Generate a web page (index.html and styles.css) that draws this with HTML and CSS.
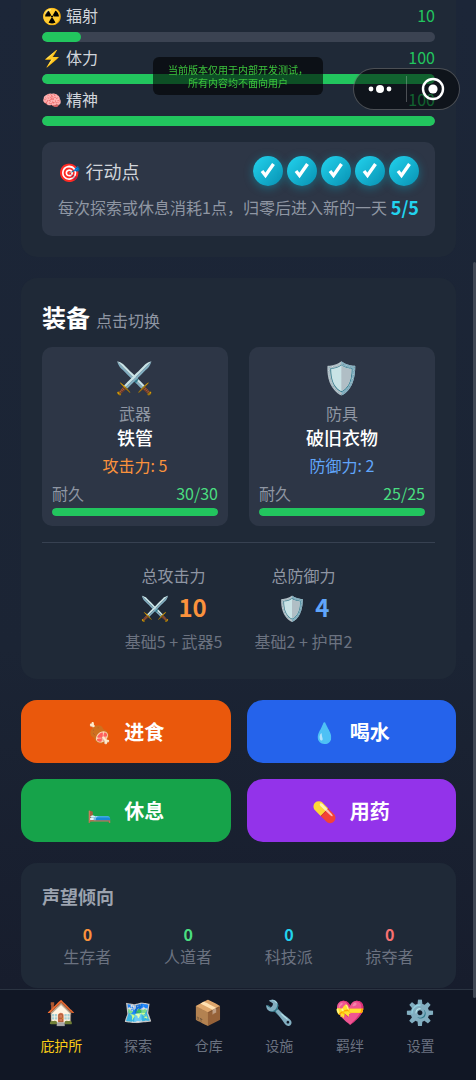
FILE: index.html
```
<!DOCTYPE html>
<html lang="zh-CN">
<head>
    <meta charset="UTF-8">
    <meta name="viewport" content="width=device-width, initial-scale=1.0">
    <title>庇护所</title>
    <link rel="stylesheet" href="styles.css">
</head>
<body>
    <div class="notice">当前版本仅用于内部开发测试，<br>所有内容均不面向用户</div>
    <div class="capsule">
        <button type="button" aria-label="更多">
            <svg width="24" height="24" viewBox="0 0 24 24" fill="#fff"><circle cx="3" cy="12" r="2.4"/><circle cx="12" cy="12" r="4"/><circle cx="21" cy="12" r="2.4"/></svg>
        </button>
        <span class="capsule-line"></span>
        <button type="button" aria-label="关闭">
            <svg width="24" height="24" viewBox="0 0 24 24"><circle cx="12" cy="12" r="10" fill="none" stroke="#fff" stroke-width="2.4"/><circle cx="12" cy="12" r="4.6" fill="#fff"/></svg>
        </button>
    </div>
    <div class="scrollbar"></div>

    <main class="page">
        <section class="card status">
            <div class="stat">
                <div class="stat-head"><span><i class="emoji">☢️</i>辐射</span><span class="stat-value">10</span></div>
                <div class="bar"><div class="bar-fill" style="width: 10%"></div></div>
            </div>
            <div class="stat">
                <div class="stat-head"><span><i class="emoji">⚡</i>体力</span><span class="stat-value">100</span></div>
                <div class="bar"><div class="bar-fill" style="width: 100%"></div></div>
            </div>
            <div class="stat">
                <div class="stat-head"><span><i class="emoji">🧠</i>精神</span><span class="stat-value">100</span></div>
                <div class="bar"><div class="bar-fill" style="width: 100%"></div></div>
            </div>
            <div class="action">
                <div class="action-row">
                    <span class="action-title"><i class="emoji">🎯</i>行动点</span>
                    <div class="points">
                        <span class="point"><svg viewBox="0 0 30 30"><path d="M9 15l3.500 4.500L20.500 8"/></svg></span>
                        <span class="point"><svg viewBox="0 0 30 30"><path d="M9 15l3.500 4.500L20.500 8"/></svg></span>
                        <span class="point"><svg viewBox="0 0 30 30"><path d="M9 15l3.500 4.500L20.500 8"/></svg></span>
                        <span class="point"><svg viewBox="0 0 30 30"><path d="M9 15l3.500 4.500L20.500 8"/></svg></span>
                        <span class="point"><svg viewBox="0 0 30 30"><path d="M9 15l3.500 4.500L20.500 8"/></svg></span>
                    </div>
                </div>
                <div class="action-row">
                    <span class="action-hint">每次探索或休息消耗1点，归零后进入新的一天</span>
                    <span class="action-count">5/5</span>
                </div>
            </div>
        </section>

        <section class="card">
            <h2>装备<small>点击切换</small></h2>
            <div class="equips">
                <button type="button" class="equip">
                    <i class="emoji">⚔️</i>
                    <span class="equip-slot">武器</span>
                    <span class="equip-name">铁管</span>
                    <span class="equip-stat orange">攻击力: 5</span>
                    <span class="equip-dur"><span>耐久</span><span class="green">30/30</span></span>
                    <span class="bar small"><span class="bar-fill" style="width: 100%"></span></span>
                </button>
                <button type="button" class="equip">
                    <i class="emoji">🛡️</i>
                    <span class="equip-slot">防具</span>
                    <span class="equip-name">破旧衣物</span>
                    <span class="equip-stat blue">防御力: 2</span>
                    <span class="equip-dur"><span>耐久</span><span class="green">25/25</span></span>
                    <span class="bar small"><span class="bar-fill" style="width: 100%"></span></span>
                </button>
            </div>
            <div class="totals">
                <div class="total">
                    <span class="total-label">总攻击力</span>
                    <span class="total-value orange"><i class="emoji">⚔️</i>10</span>
                    <span class="total-note">基础5 + 武器5</span>
                </div>
                <div class="total">
                    <span class="total-label">总防御力</span>
                    <span class="total-value blue"><i class="emoji">🛡️</i>4</span>
                    <span class="total-note">基础2 + 护甲2</span>
                </div>
            </div>
        </section>

        <div class="actions">
            <button type="button" class="eat"><i class="emoji">🍖</i>进食</button>
            <button type="button" class="drink"><i class="emoji">💧</i>喝水</button>
            <button type="button" class="rest"><i class="emoji">🛏️</i>休息</button>
            <button type="button" class="heal"><i class="emoji">💊</i>用药</button>
        </div>

        <section class="card">
            <h3>声望倾向</h3>
            <div class="factions">
                <div><b class="orange">0</b><span>生存者</span></div>
                <div><b class="green">0</b><span>人道者</span></div>
                <div><b class="cyan">0</b><span>科技派</span></div>
                <div><b class="red">0</b><span>掠夺者</span></div>
            </div>
        </section>
    </main>

    <nav class="tabs">
        <a href="#home" class="active"><i class="emoji">🏠</i>庇护所</a>
        <a href="#explore"><i class="emoji">🗺️</i>探索</a>
        <a href="#storage"><i class="emoji">📦</i>仓库</a>
        <a href="#facility"><i class="emoji">🔧</i>设施</a>
        <a href="#bond"><i class="emoji">💝</i>羁绊</a>
        <a href="#settings"><i class="emoji">⚙️</i>设置</a>
    </nav>
</body>
</html>
```

FILE: styles.css
```
* {
    box-sizing: border-box;
}
body {
    margin: 0;
    min-height: 100vh;
    display: flex;
    flex-direction: column;
    font-family: "Noto Sans CJK SC", sans-serif;
    font-size: 16px;
    line-height: 24px;
    color: #d1d5db;
    background: linear-gradient(180deg, #1c2638, #1b2434 60%, #161b2b);
}
button {
    font: inherit;
    color: inherit;
    border: none;
    padding: 0;
    cursor: pointer;
}
.emoji {
    font-family: "Noto Color Emoji", sans-serif;
    font-style: normal;
    font-weight: 400;
    line-height: 1;
}
.orange { color: #fb923c; }
.blue { color: #60a5fa; }
.green { color: #4ade80; }
.cyan { color: #22d3ee; }
.red { color: #f87171; }

/* floating mini program chrome */
.notice {
    position: fixed;
    z-index: 10;
    top: 57px;
    left: 50%;
    transform: translateX(-50%);
    padding: 6px 15px;
    border-radius: 6px;
    background: rgba(0, 0, 0, 0.6);
    color: #3cc43c;
    font-size: 10px;
    line-height: 13px;
    text-align: center;
    white-space: nowrap;
}
.capsule {
    position: fixed;
    z-index: 10;
    top: 68px;
    right: 16px;
    width: 107px;
    height: 42px;
    display: flex;
    align-items: center;
    border: 1px solid rgba(255, 255, 255, 0.25);
    border-radius: 21px;
    background: rgba(0, 0, 0, 0.5);
}
.capsule button {
    flex: 1;
    height: 24px;
    background: none;
}
.capsule svg {
    display: block;
    margin: 0 auto;
}
.capsule-line {
    width: 1px;
    height: 26px;
    background: rgba(255, 255, 255, 0.25);
}
.scrollbar {
    position: fixed;
    z-index: 10;
    top: 262px;
    right: 0;
    width: 3px;
    height: 736px;
    border-radius: 2px;
    background: #414855;
}

.page {
    flex: 1;
    display: flex;
    flex-direction: column;
    gap: 21px;
    padding: 0 20px 0 21px;
}
.card {
    padding: 21px;
    border-radius: 16px;
    background: #1f2937;
}
.card.status {
    padding-top: 4px;
    border-radius: 0 0 16px 16px;
}

.stat {
    margin-bottom: 4px;
}
.stat-head {
    display: flex;
    justify-content: space-between;
    height: 24px;
    line-height: 22px;
    margin-bottom: 4px;
}
.stat-head .emoji {
    margin-right: 4px;
}
.stat-value {
    color: #22c55e;
}
.bar {
    display: block;
    width: 100%;
    height: 10px;
    border-radius: 5px;
    background: #3b4352;
    overflow: hidden;
}
.bar-fill {
    display: block;
    height: 100%;
    border-radius: 5px;
    background: #22c55e;
}
.bar.small {
    height: 8px;
    margin-top: 3px;
}

.action {
    display: grid;
    gap: 8px;
    margin-top: 16px;
    padding: 14px 16px 16px;
    border-radius: 10px;
    background: #2d3646;
}
.action-row {
    display: flex;
    align-items: center;
    justify-content: space-between;
    line-height: 26px;
    white-space: nowrap;
}
.action-title {
    font-size: 18px;
}
.action-title .emoji {
    margin-right: 5px;
}
.points {
    display: flex;
    gap: 4px;
}
.point {
    width: 30px;
    height: 30px;
    border-radius: 50%;
    background: linear-gradient(135deg, #22d3ee, #0891b2);
    box-shadow: 0 2px 10px rgba(6, 182, 212, 0.4);
}
.point svg {
    display: block;
    fill: none;
    stroke: #fff;
    stroke-width: 3.4;
}
.action-hint {
    color: #8f96a3;
}
.action-count {
    font-size: 18px;
    font-weight: 700;
    color: #22d3ee;
}

h2 {
    display: flex;
    align-items: baseline;
    height: 36px;
    margin: 0 0 12px;
    font-size: 24px;
    line-height: 36px;
    color: #fff;
}
h2 small {
    margin-left: 6px;
    font-size: 16px;
    font-weight: 400;
    color: #8f96a3;
}
.equips {
    display: grid;
    grid-template-columns: 1fr 1fr;
    gap: 21px;
}
.equip {
    display: flex;
    flex-direction: column;
    align-items: center;
    padding: 10px;
    border-radius: 10px;
    background: #2d3646;
}
.equip .emoji {
    font-size: 31px;
    line-height: 44px;
}
.equip-slot {
    color: #8f96a3;
}
.equip-name {
    font-size: 18px;
    font-weight: 500;
    color: #fff;
}
.equip-stat {
    margin-top: 4px;
}
.equip-dur {
    width: 100%;
    display: flex;
    justify-content: space-between;
    margin-top: 4px;
    color: #8f96a3;
}

.totals {
    display: flex;
    justify-content: center;
    gap: 32px;
    margin-top: 16px;
    padding: 20px 0 5px;
    border-top: 1px solid #374151;
}
.total {
    display: flex;
    flex-direction: column;
    align-items: center;
}
.total-label {
    color: #8f96a3;
}
.total-value {
    height: 40px;
    font-size: 24px;
    line-height: 40px;
    font-weight: 700;
}
.total-value .emoji {
    margin-right: 8px;
}
.total-note {
    margin-top: 2px;
    color: #6b7280;
}

.actions {
    display: grid;
    grid-template-columns: 1fr 1fr;
    gap: 16px;
}
.actions button {
    height: 63px;
    border-radius: 16px;
    font-size: 20px;
    font-weight: 700;
    color: #fff;
}
.actions .emoji {
    margin-right: 12px;
}
.actions .eat { background: #ea580c; }
.actions .drink { background: #2563eb; }
.actions .rest { background: #16a34a; }
.actions .heal { background: #9333ea; }

h3 {
    margin: 0 0 15px;
    font-size: 18px;
    line-height: 24px;
    color: #9ca3af;
}
.factions {
    display: grid;
    grid-template-columns: repeat(4, 1fr);
    gap: 10px;
    text-align: center;
    line-height: 22px;
}
.factions b,
.factions span {
    display: block;
}
.factions span {
    color: #6b7280;
}

.tabs {
    position: sticky;
    bottom: 0;
    height: 91px;
    display: flex;
    justify-content: space-around;
    padding: 3px 20px 0;
    border-top: 1px solid #2b3442;
    background: #111725;
}
.tabs a {
    display: flex;
    flex-direction: column;
    align-items: center;
    font-size: 14px;
    color: #6b7280;
    text-decoration: none;
}
.tabs .emoji {
    font-size: 24px;
    line-height: 40px;
}
.tabs .active {
    color: #facc15;
}
```
